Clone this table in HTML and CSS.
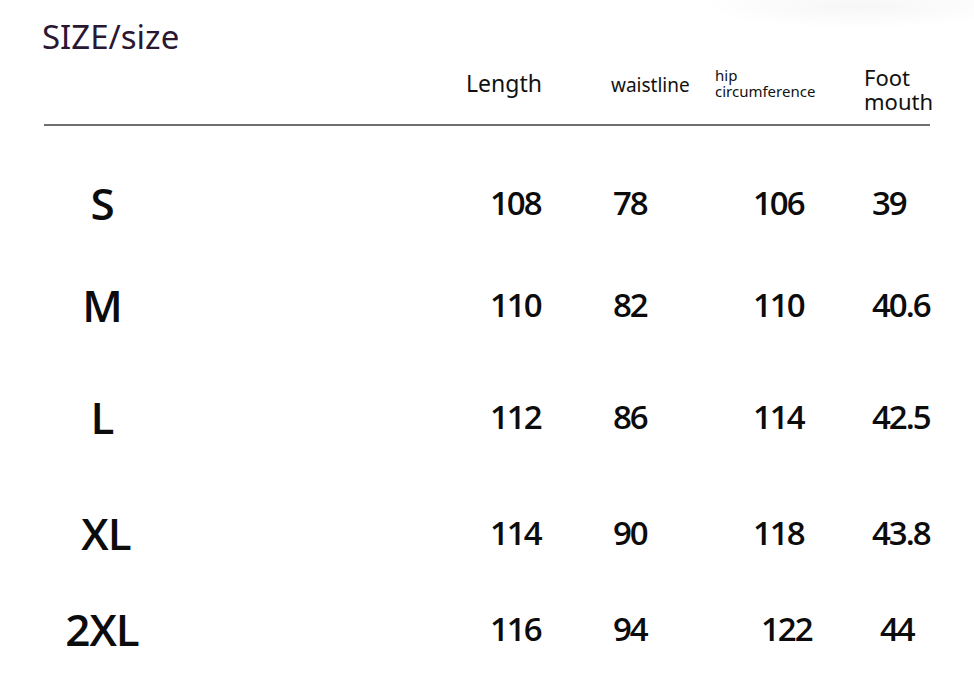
FILE: index.html
```html
<!DOCTYPE html>
<html>
<head>
<meta charset="utf-8">
<link rel="stylesheet" href="styles.css">
</head>
<body>
<div class="page">
  <h1 class="title">SIZE/size</h1>
  <div class="head">
    <div class="h-length">Length</div>
    <div class="h-waist">waistline</div>
    <div class="h-hip"><div>hip</div><div>circumference</div></div>
    <div class="h-foot"><div>Foot</div><div>mouth</div></div>
  </div>
  <div class="rule"></div>
  <div class="rows">
    <div class="row r1">
      <div class="label"><span>S</span></div>
      <div class="num">108</div>
      <div class="num">78</div>
      <div class="num">106</div>
      <div class="num">39</div>
    </div>
    <div class="row r2">
      <div class="label"><span>M</span></div>
      <div class="num">110</div>
      <div class="num">82</div>
      <div class="num">110</div>
      <div class="num">40.6</div>
    </div>
    <div class="row r3">
      <div class="label"><span>L</span></div>
      <div class="num">112</div>
      <div class="num">86</div>
      <div class="num">114</div>
      <div class="num">42.5</div>
    </div>
    <div class="row r4">
      <div class="label"><span class="xl">XL</span></div>
      <div class="num">114</div>
      <div class="num">90</div>
      <div class="num">118</div>
      <div class="num">43.8</div>
    </div>
    <div class="row r5">
      <div class="label"><span>2XL</span></div>
      <div class="num">116</div>
      <div class="num">94</div>
      <div class="num nudge">122</div>
      <div class="num nudge">44</div>
    </div>
  </div>
</div>
</body>
</html>
```

FILE: styles.css
```css
html, body {
  margin: 0;
  padding: 0;
  background: #ffffff;
}

.page {
  width: 974px;
  height: 673px;
  overflow: hidden;
  color: #111;
  background: radial-gradient(ellipse 160px 22px at 860px 6px, #f6f6f6 0%, #ffffff 100%);
}

.title {
  margin: 0;
  padding: 17px 0 0 42px;
  font-family: "Noto Sans", sans-serif;
  font-weight: 400;
  font-size: 33px;
  line-height: 40px;
  color: #2a1731;
}

.head {
  margin-top: 8px;
  height: 50px;
  padding-left: 466px;
  display: grid;
  grid-template-columns: 145px 104px 149px auto;
  font-family: "Noto Sans", sans-serif;
  color: #111;
}

.h-length {
  padding-top: 4px;
  font-size: 23px;
  line-height: 28px;
}

.h-waist {
  padding-top: 8px;
  font-size: 19px;
  line-height: 24px;
}

.h-hip {
  padding-top: 2px;
  font-size: 15px;
  line-height: 16px;
}

.h-foot {
  padding-top: 0;
  font-size: 22px;
  line-height: 24px;
}

.rule {
  margin: 9px 0 0 44px;
  width: 886px;
  height: 2px;
  background: #6f6f6f;
}

.rows {
  font-family: "Open Sans", sans-serif;
  font-weight: 600;
  color: #0c0c0c;
}

.row {
  display: grid;
  grid-template-columns: 490px 123px 140px 119px 1fr;
  align-items: center;
  height: 56px;
}

.r1 { margin-top: 49px; }
.r2 { margin-top: 46px; }
.r3 { margin-top: 56px; }
.r4 { margin-top: 60px; }
.r5 { margin-top: 40px; }

.label span {
  display: block;
  width: 204px;
  text-align: center;
  font-size: 44px;
  letter-spacing: -1px;
  line-height: 56px;
}

.label .xl {
  width: 212px;
}

.num {
  font-size: 33px;
  letter-spacing: -2px;
  line-height: 56px;
}

.nudge {
  padding-left: 8px;
}
```
